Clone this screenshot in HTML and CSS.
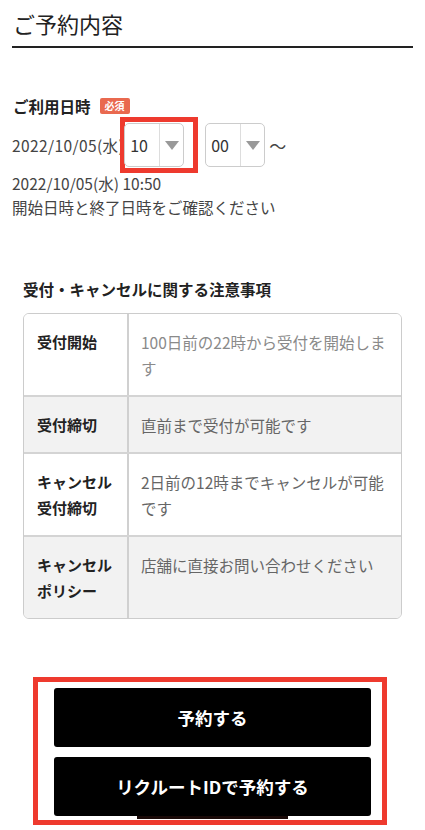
FILE: index.html
```html
<!DOCTYPE html>
<html lang="ja">
<head>
    <meta charset="UTF-8">
    <meta name="viewport" content="width=device-width, initial-scale=1.0">
    <title>ご予約内容</title>
    <link rel="stylesheet" href="styles.css">
</head>
<body>
    <h1 class="page-title">ご予約内容</h1>

    <!-- 利用日時 -->
    <section class="date-section">
        <div class="field-label">ご利用日時<span class="badge">必須</span></div>
        <div class="time-row">
            <span class="date-text">2022/10/05(水)</span>
            <span class="highlight">
                <span class="time-select">
                    <span class="select-value">10</span>
                    <span class="select-arrow"></span>
                </span>
            </span>
            <span class="time-select">
                <span class="select-value">00</span>
                <span class="select-arrow"></span>
            </span>
            <span class="tilde">〜</span>
        </div>
        <p class="date-line">2022/10/05(水) 10:50</p>
        <p class="date-line">開始日時と終了日時をご確認ください</p>
    </section>

    <!-- 注意事項 -->
    <section class="notice">
        <h2 class="notice-title">受付・キャンセルに関する注意事項</h2>
        <div class="notice-table">
            <div class="notice-row">
                <div class="notice-head">受付開始</div>
                <div class="notice-body light">100日前の22時から受付を開始します</div>
            </div>
            <div class="notice-row gray">
                <div class="notice-head">受付締切</div>
                <div class="notice-body">直前まで受付が可能です</div>
            </div>
            <div class="notice-row">
                <div class="notice-head">キャンセル<br>受付締切</div>
                <div class="notice-body">2日前の12時までキャンセルが可能です</div>
            </div>
            <div class="notice-row gray">
                <div class="notice-head">キャンセル<br>ポリシー</div>
                <div class="notice-body">店舗に直接お問い合わせください</div>
            </div>
        </div>
    </section>

    <!-- ボタン -->
    <div class="button-frame">
        <button type="button" class="reserve-btn">予約する</button>
        <button type="button" class="reserve-btn tabbed">リクルートIDで予約する</button>
    </div>
</body>
</html>
```

FILE: styles.css
```css
body {
    font-family: "Noto Sans CJK JP", "Noto Sans", sans-serif;
    background-color: #fff;
    color: #333;
    margin: 0;
    width: 425px;
}

.page-title {
    margin: 0 12px;
    padding: 7px 0 7px 1px;
    font-size: 22px;
    font-weight: normal;
    line-height: 32px;
    color: #222;
    border-bottom: 2px solid #222;
}

/* Date section */
.date-section {
    padding: 0 12px;
}

.field-label {
    display: flex;
    align-items: center;
    margin-top: 47px;
    font-size: 15.5px;
    font-weight: bold;
    line-height: 22px;
    color: #222;
    padding-left: 1px;
}

.badge {
    display: inline-block;
    margin-left: 9px;
    width: 30px;
    height: 16px;
    line-height: 16px;
    text-align: center;
    font-size: 10px;
    color: #fff;
    background-color: #e9694f;
    border-radius: 2px;
}

.time-row {
    display: flex;
    align-items: center;
    height: 56px;
    font-size: 15.5px;
    color: #444;
}

.date-text {
    white-space: nowrap;
    letter-spacing: 0.4px;
}

.highlight {
    position: relative;
    display: flex;
    margin-left: -4px;
    padding: 1px 9px 1px 0;
    border: 5px solid #ee3a2e;
    background-color: #fff;
}

.highlight .time-select {
    margin-left: -1px;
}

.time-select {
    display: flex;
    height: 42px;
    border: 1px solid #ccc;
    border-radius: 5px;
    background-color: #fff;
    font-size: 16px;
    color: #333;
}

.time-row > .time-select {
    margin-left: 7px;
}

.select-value {
    width: 29px;
    padding-left: 5px;
    line-height: 42px;
    border-right: 1px solid #ddd;
}

.select-arrow {
    width: 23px;
    display: flex;
    align-items: center;
    justify-content: center;
}

.select-arrow::after {
    content: "";
    border-left: 7px solid transparent;
    border-right: 7px solid transparent;
    border-top: 9px solid #999;
}

.tilde {
    margin-left: 4px;
    font-size: 17px;
}

.date-line {
    margin: 0;
    font-size: 15.5px;
    line-height: 24px;
    color: #444;
}

.date-line:first-of-type {
    margin-top: -2px;
}

/* Notice table */
.notice {
    margin: 59px 23px 0;
}

.notice-title {
    margin: 0;
    font-size: 15.5px;
    font-weight: bold;
    line-height: 22px;
    color: #222;
}

.notice-table {
    margin-top: 13px;
    border: 1px solid #ccc;
    border-radius: 6px;
    overflow: hidden;
}

.notice-row {
    display: flex;
    background-color: #fff;
}

.notice-row + .notice-row {
    border-top: 2px solid #d4d4d4;
}

.notice-row.gray {
    background-color: #f2f2f2;
}

.notice-head {
    width: 90px;
    flex-shrink: 0;
    padding: 15px 0 14px 13px;
    font-size: 15px;
    font-weight: bold;
    line-height: 26px;
    color: #222;
    border-right: 2px solid #d0d0d0;
}

.notice-body {
    flex: 1;
    padding: 15px 8px 14px 12px;
    font-size: 15.5px;
    line-height: 26px;
    color: #666;
}

.notice-body.light {
    color: #8a8a8a;
}

/* Buttons */
.button-frame {
    display: flex;
    flex-direction: column;
    gap: 10px;
    margin: 58px 0 0 33px;
    padding: 6px 11px 4px 16px;
    border: 5px solid #ee3a2e;
    box-sizing: content-box;
    width: 317px;
}

.reserve-btn {
    position: relative;
    height: 59px;
    border: none;
    border-radius: 3px;
    background-color: #000;
    color: #fff;
    font-family: inherit;
    font-size: 17.5px;
    font-weight: bold;
    cursor: pointer;
}

.reserve-btn.tabbed::after {
    content: "";
    position: absolute;
    left: 83px;
    bottom: -3px;
    width: 151px;
    height: 3px;
    background-color: #1a0a08;
}
```
